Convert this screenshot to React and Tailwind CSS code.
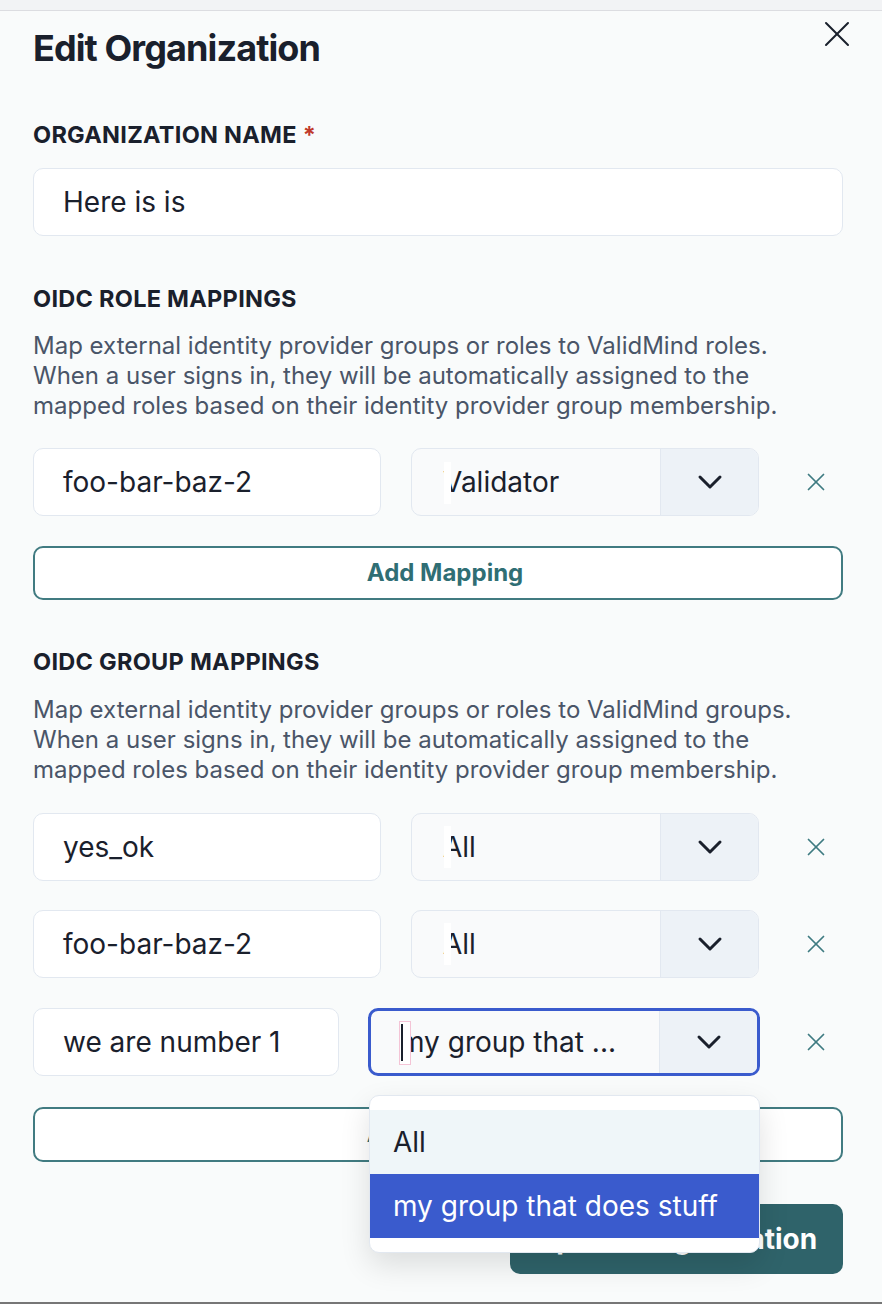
import React from "react";
import { ChevronDown, X } from "lucide-react";

const ink = "text-[#1a202c]";

function TextInput({ value, width }) {
  return (
    <div
      className={`flex h-[68px] shrink-0 items-center rounded-[10px] border-[1.5px] border-[#e2e8f0] bg-white pl-[29px] text-[28px] ${ink} ${width}`}
    >
      {value}
    </div>
  );
}

function SelectBox({ value, width, focused = false, cursor = false, marginLeft }) {
  const frame = focused
    ? "border-[3px] border-[#3a5bcd]"
    : "border-[1.5px] border-[#e2e8f0]";
  return (
    <div
      className={`relative flex h-[68px] shrink-0 overflow-hidden rounded-[10px] bg-[#f9fafb] ${frame} ${width} ${marginLeft}`}
    >
      <div
        className={`flex flex-1 items-center whitespace-nowrap text-[28px] ${ink} ${
          focused ? "pl-[29px]" : "pl-[31px]"
        }`}
      >
        {value}
      </div>
      <div className="flex w-[98px] items-center justify-center border-l-[1.5px] border-[#e2e8f0] bg-[#edf2f7] text-[#1a202c]">
        <ChevronDown size={40} strokeWidth={1.8} />
      </div>
      {cursor ? (
        <div className="absolute left-[28px] top-[10px] h-[44px] w-[12px] border border-[#f4c4d6] bg-white">
          <div className="ml-[1px] mt-[2px] h-[37px] w-[2px] bg-[#1a202c]" />
        </div>
      ) : (
        <div className="absolute left-[31.5px] top-[12.5px] h-[42px] w-[7px] bg-white" />
      )}
    </div>
  );
}

function RemoveButton({ marginLeft }) {
  return (
    <div className={`flex shrink-0 items-center text-[#3e7b81] ${marginLeft}`}>
      <X size={30} strokeWidth={1.4} />
    </div>
  );
}

function SectionLabel({ children, className = "" }) {
  return (
    <div
      className={`text-[23.5px] font-bold uppercase leading-none tracking-[0.012em] ${ink} ${className}`}
    >
      {children}
    </div>
  );
}

function AddMappingButton({ className = "" }) {
  return (
    <div
      className={`flex w-[810px] items-center justify-center rounded-[10px] border-2 border-[#417b81] bg-white pl-[14px] text-[24px] font-bold text-[#2f6e74] ${className}`}
    >
      Add Mapping
    </div>
  );
}

export default function App() {
  return (
    <div className="relative h-[1304px] w-[882px] overflow-hidden bg-[#f9fbfb] font-['Inter',sans-serif]">
      <div className="h-[11px] border-b border-[#dcdde1] bg-[#f2f3f5]" />

      <div className="pl-[33px] pr-[39px]">
        <div className="mt-[19px] flex items-start justify-between">
          <h1 className={`text-[36px] font-bold leading-none tracking-[-0.025em] ${ink}`}>
            Edit Organization
          </h1>
          <div className="-mr-[16px] -mt-[18px] text-[#1a202c]">
            <X size={44} strokeWidth={1.1} />
          </div>
        </div>

        <SectionLabel className="mt-[57px]">
          Organization Name <span className="text-[#c0392b]">*</span>
        </SectionLabel>
        <div className="mt-[21px]">
          <TextInput value="Here is is" width="w-[810px]" />
        </div>

        <SectionLabel className="mt-[51px]">OIDC Role Mappings</SectionLabel>
        <p className="mt-[21px] text-[24px] leading-[30px] text-[#4a5568]">
          Map external identity provider groups or roles to ValidMind roles.
          <br />
          When a user signs in, they will be automatically assigned to the
          <br />
          mapped roles based on their identity provider group membership.
        </p>

        <div className="mt-[27px] flex items-center">
          <TextInput value="foo-bar-baz-2" width="w-[348px]" />
          <SelectBox value="Validator" width="w-[348px]" marginLeft="ml-[30px]" />
          <RemoveButton marginLeft="ml-[42px]" />
        </div>
        <AddMappingButton className="mt-[30px] h-[54px]" />

        <SectionLabel className="mt-[50px]">OIDC Group Mappings</SectionLabel>
        <p className="mt-[21px] text-[24px] leading-[30px] text-[#4a5568]">
          Map external identity provider groups or roles to ValidMind groups.
          <br />
          When a user signs in, they will be automatically assigned to the
          <br />
          mapped roles based on their identity provider group membership.
        </p>

        <div className="mt-[28px] flex flex-col gap-[29px]">
          <div className="flex items-center">
            <TextInput value="yes_ok" width="w-[348px]" />
            <SelectBox value="All" width="w-[348px]" marginLeft="ml-[30px]" />
            <RemoveButton marginLeft="ml-[42px]" />
          </div>
          <div className="flex items-center">
            <TextInput value="foo-bar-baz-2" width="w-[348px]" />
            <SelectBox value="All" width="w-[348px]" marginLeft="ml-[30px]" />
            <RemoveButton marginLeft="ml-[42px]" />
          </div>
          <div className="mt-[1px] flex items-center">
            <TextInput value="we are number 1" width="w-[306px]" />
            <SelectBox
              value="my group that ..."
              width="w-[392px]"
              marginLeft="ml-[29px]"
              focused
              cursor
            />
            <RemoveButton marginLeft="ml-[41px]" />
          </div>
        </div>
        <AddMappingButton className="mt-[31px] h-[55px]" />

        <div className="mt-[42px] flex justify-end">
          <div className="flex h-[70px] w-[333px] items-center justify-center rounded-[10px] bg-[#2f636a] text-[28px] font-bold text-white">
            Update Organization
          </div>
        </div>
      </div>

      {/* open listbox of the focused group select */}
      <div className="absolute left-[369px] top-[1095px] w-[391px] rounded-[10px] border border-[#e2e8f0] bg-white py-[14px] shadow-[0_12px_30px_rgba(0,0,0,0.12)]">
        <div className={`flex h-[64px] items-center bg-[#eff6f9] pl-[23px] text-[28px] ${ink}`}>
          All
        </div>
        <div className="flex h-[64px] items-center bg-[#3a5bcd] pl-[23px] text-[28px] text-white">
          my group that does stuff
        </div>
      </div>

      <div className="absolute bottom-0 left-0 h-[2px] w-full bg-[#767676]" />
    </div>
  );
}
